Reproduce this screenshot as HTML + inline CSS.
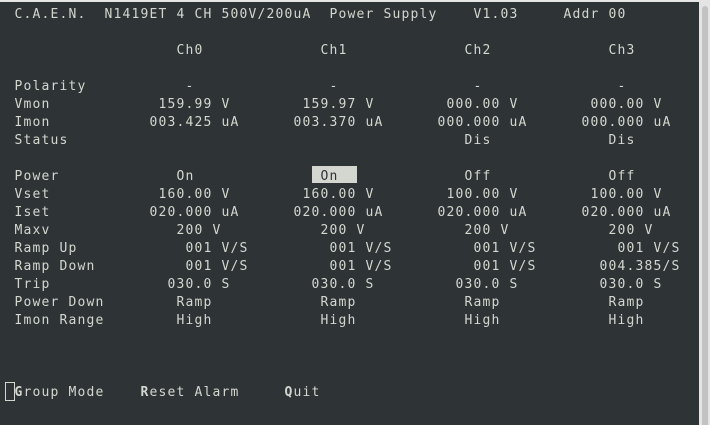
<!DOCTYPE html>
<html><head><meta charset="utf-8"><style>
html,body{margin:0;padding:0}
body{width:710px;height:425px;background:#2e3436;position:relative;overflow:hidden;font-family:"DejaVu Sans Mono","Liberation Mono",monospace;font-size:13px;letter-spacing:1.174px;color:#d3d7cf}
span{position:absolute;white-space:pre;line-height:18px;height:18px;margin-top:2px}
b{font-weight:bold}
.top{position:absolute;left:0;top:0;width:710px;height:2px;background:#e6e6e6}
.sb{position:absolute;left:699px;top:0;width:11px;height:425px;background:#e4e4e4}
.th{position:absolute;left:702px;top:6px;width:6px;height:419px;background:#c2c2c2;border-radius:3px 3px 0 0}
span.hl{background:#d3d7cf;color:#2e3436;margin-top:0;line-height:22px;height:17px;overflow:hidden}
.cur{position:absolute;left:5px;top:382px;width:8px;height:17px;border:1px solid #d3d7cf}
</style></head><body>
<div class="top"></div><div class="sb"></div><div class="th"></div>
<span style="left:14.5px;top:4px">C.A.E.N.  N1419ET 4 CH 500V/200uA  Power Supply    V1.03     Addr 00</span>

<span style="left:176.5px;top:40px">Ch0</span>
<span style="left:320.5px;top:40px">Ch1</span>
<span style="left:464.5px;top:40px">Ch2</span>
<span style="left:608.5px;top:40px">Ch3</span>

<span style="left:14.5px;top:76px">Polarity</span>
<span style="left:185.5px;top:76px">-</span>
<span style="left:329.5px;top:76px">-</span>
<span style="left:473.5px;top:76px">-</span>
<span style="left:617.5px;top:76px">-</span>

<span style="left:14.5px;top:94px">Vmon</span>
<span style="left:158.5px;top:94px">159.99 V</span>
<span style="left:302.5px;top:94px">159.97 V</span>
<span style="left:446.5px;top:94px">000.00 V</span>
<span style="left:590.5px;top:94px">000.00 V</span>

<span style="left:14.5px;top:112px">Imon</span>
<span style="left:149.5px;top:112px">003.425 uA</span>
<span style="left:293.5px;top:112px">003.370 uA</span>
<span style="left:437.5px;top:112px">000.000 uA</span>
<span style="left:581.5px;top:112px">000.000 uA</span>

<span style="left:14.5px;top:130px">Status</span>
<span style="left:464.5px;top:130px">Dis</span>
<span style="left:608.5px;top:130px">Dis</span>

<span style="left:14.5px;top:166px">Power</span>
<span style="left:176.5px;top:166px">On</span>
<span class="hl" style="left:311.5px;top:166px"> On  </span>
<span style="left:464.5px;top:166px">Off</span>
<span style="left:608.5px;top:166px">Off</span>

<span style="left:14.5px;top:184px">Vset</span>
<span style="left:158.5px;top:184px">160.00 V</span>
<span style="left:302.5px;top:184px">160.00 V</span>
<span style="left:446.5px;top:184px">100.00 V</span>
<span style="left:590.5px;top:184px">100.00 V</span>

<span style="left:14.5px;top:202px">Iset</span>
<span style="left:149.5px;top:202px">020.000 uA</span>
<span style="left:293.5px;top:202px">020.000 uA</span>
<span style="left:437.5px;top:202px">020.000 uA</span>
<span style="left:581.5px;top:202px">020.000 uA</span>

<span style="left:14.5px;top:220px">Maxv</span>
<span style="left:176.5px;top:220px">200 V</span>
<span style="left:320.5px;top:220px">200 V</span>
<span style="left:464.5px;top:220px">200 V</span>
<span style="left:608.5px;top:220px">200 V</span>

<span style="left:14.5px;top:238px">Ramp Up</span>
<span style="left:185.5px;top:238px">001 V/S</span>
<span style="left:329.5px;top:238px">001 V/S</span>
<span style="left:473.5px;top:238px">001 V/S</span>
<span style="left:617.5px;top:238px">001 V/S</span>

<span style="left:14.5px;top:256px">Ramp Down</span>
<span style="left:185.5px;top:256px">001 V/S</span>
<span style="left:329.5px;top:256px">001 V/S</span>
<span style="left:473.5px;top:256px">001 V/S</span>
<span style="left:599.5px;top:256px">004.385/S</span>

<span style="left:14.5px;top:274px">Trip</span>
<span style="left:167.5px;top:274px">030.0 S</span>
<span style="left:311.5px;top:274px">030.0 S</span>
<span style="left:455.5px;top:274px">030.0 S</span>
<span style="left:599.5px;top:274px">030.0 S</span>

<span style="left:14.5px;top:292px">Power Down</span>
<span style="left:176.5px;top:292px">Ramp</span>
<span style="left:320.5px;top:292px">Ramp</span>
<span style="left:464.5px;top:292px">Ramp</span>
<span style="left:608.5px;top:292px">Ramp</span>

<span style="left:14.5px;top:310px">Imon Range</span>
<span style="left:176.5px;top:310px">High</span>
<span style="left:320.5px;top:310px">High</span>
<span style="left:464.5px;top:310px">High</span>
<span style="left:608.5px;top:310px">High</span>

<div class="cur"></div>
<span style="left:14.5px;top:382px"><b>G</b>roup Mode</span>
<span style="left:140.5px;top:382px"><b>R</b>eset Alarm</span>
<span style="left:284.5px;top:382px"><b>Q</b>uit</span>
</body></html>
